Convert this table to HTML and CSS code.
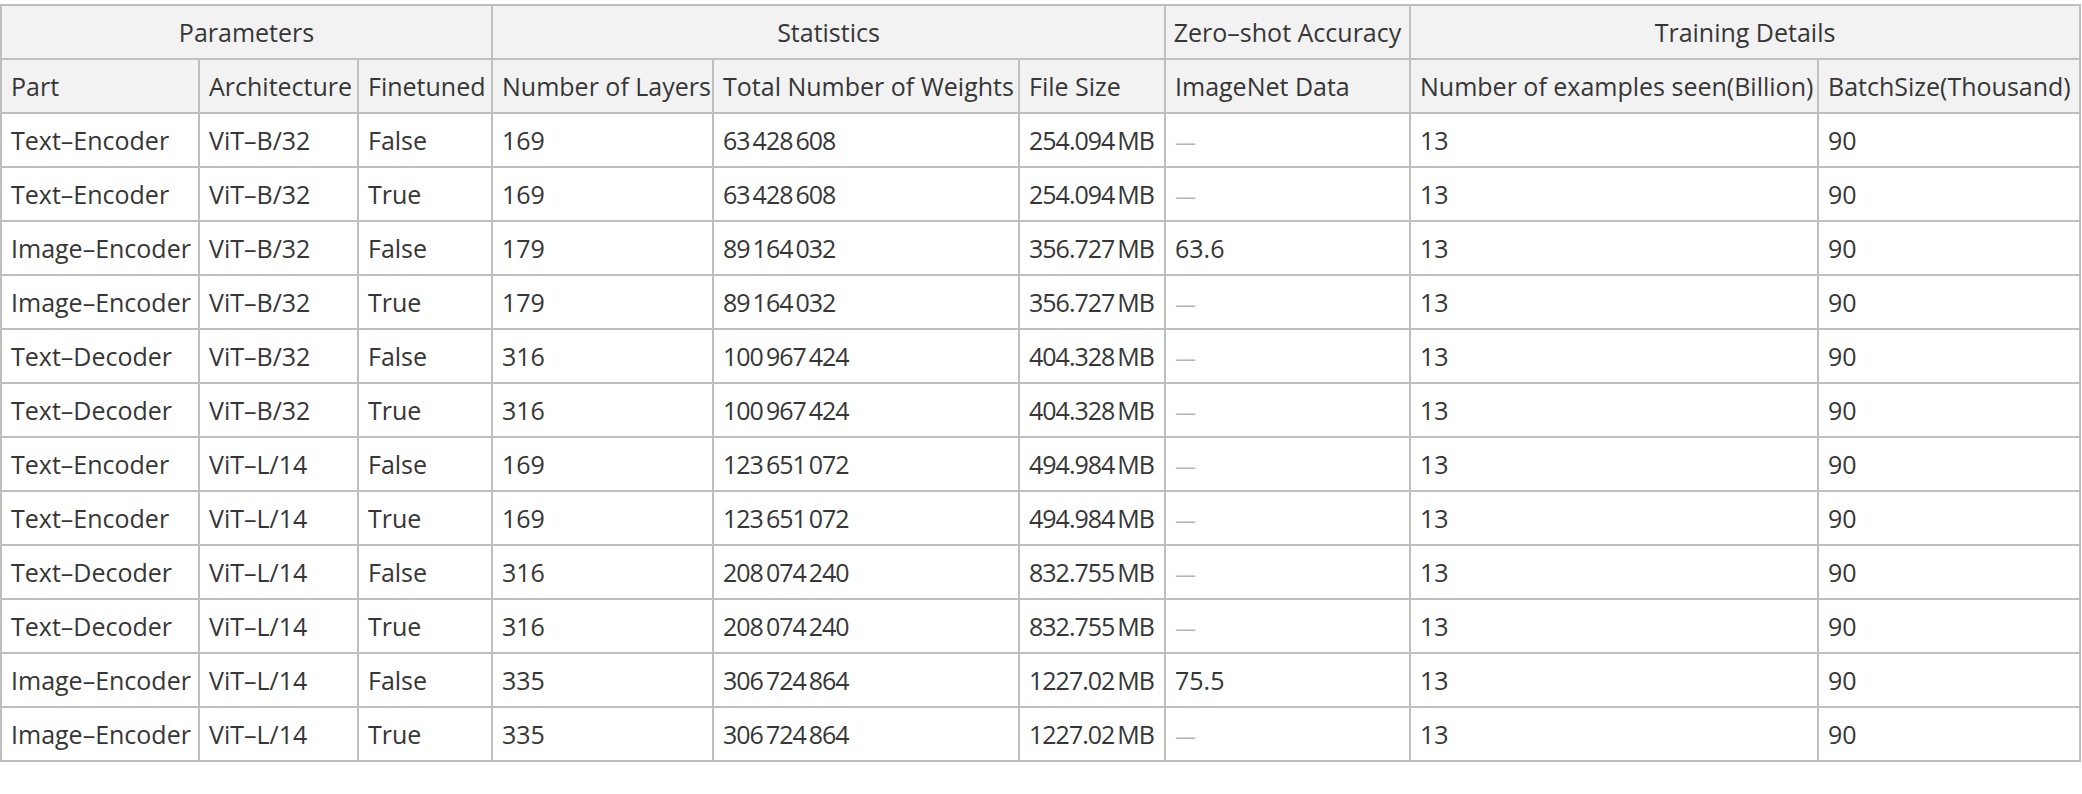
FILE: index.html
```html
<!DOCTYPE html>
<html lang="en">
<head>
<meta charset="utf-8">
<title>Model details</title>
<link rel="stylesheet" href="styles.css">
</head>
<body>
<div class="page">
<table class="grid">
  <colgroup>
    <col class="c-part">
    <col class="c-arch">
    <col class="c-fine">
    <col class="c-layers">
    <col class="c-weights">
    <col class="c-size">
    <col class="c-acc">
    <col class="c-seen">
    <col class="c-batch">
  </colgroup>
  <thead>
    <tr class="group">
      <th colspan="3">Parameters</th>
      <th colspan="3">Statistics</th>
      <th>Zero–shot Accuracy</th>
      <th colspan="2">Training Details</th>
    </tr>
    <tr class="sub">
      <th>Part</th>
      <th>Architecture</th>
      <th>Finetuned</th>
      <th>Number of Layers</th>
      <th>Total Number of Weights</th>
      <th>File Size</th>
      <th>ImageNet Data</th>
      <th>Number of examples seen(Billion)</th>
      <th>BatchSize(Thousand)</th>
    </tr>
  </thead>
  <tbody>
    <tr><td>Text–Encoder</td><td>ViT–B/32</td><td>False</td><td>169</td><td class="num">63 428 608</td><td class="num">254.094 MB</td><td><span class="na">—</span></td><td>13</td><td>90</td></tr>
    <tr><td>Text–Encoder</td><td>ViT–B/32</td><td>True</td><td>169</td><td class="num">63 428 608</td><td class="num">254.094 MB</td><td><span class="na">—</span></td><td>13</td><td>90</td></tr>
    <tr><td>Image–Encoder</td><td>ViT–B/32</td><td>False</td><td>179</td><td class="num">89 164 032</td><td class="num">356.727 MB</td><td>63.6</td><td>13</td><td>90</td></tr>
    <tr><td>Image–Encoder</td><td>ViT–B/32</td><td>True</td><td>179</td><td class="num">89 164 032</td><td class="num">356.727 MB</td><td><span class="na">—</span></td><td>13</td><td>90</td></tr>
    <tr><td>Text–Decoder</td><td>ViT–B/32</td><td>False</td><td>316</td><td class="num">100 967 424</td><td class="num">404.328 MB</td><td><span class="na">—</span></td><td>13</td><td>90</td></tr>
    <tr><td>Text–Decoder</td><td>ViT–B/32</td><td>True</td><td>316</td><td class="num">100 967 424</td><td class="num">404.328 MB</td><td><span class="na">—</span></td><td>13</td><td>90</td></tr>
    <tr><td>Text–Encoder</td><td>ViT–L/14</td><td>False</td><td>169</td><td class="num">123 651 072</td><td class="num">494.984 MB</td><td><span class="na">—</span></td><td>13</td><td>90</td></tr>
    <tr><td>Text–Encoder</td><td>ViT–L/14</td><td>True</td><td>169</td><td class="num">123 651 072</td><td class="num">494.984 MB</td><td><span class="na">—</span></td><td>13</td><td>90</td></tr>
    <tr><td>Text–Decoder</td><td>ViT–L/14</td><td>False</td><td>316</td><td class="num">208 074 240</td><td class="num">832.755 MB</td><td><span class="na">—</span></td><td>13</td><td>90</td></tr>
    <tr><td>Text–Decoder</td><td>ViT–L/14</td><td>True</td><td>316</td><td class="num">208 074 240</td><td class="num">832.755 MB</td><td><span class="na">—</span></td><td>13</td><td>90</td></tr>
    <tr><td>Image–Encoder</td><td>ViT–L/14</td><td>False</td><td>335</td><td class="num">306 724 864</td><td class="num">1227.02 MB</td><td>75.5</td><td>13</td><td>90</td></tr>
    <tr><td>Image–Encoder</td><td>ViT–L/14</td><td>True</td><td>335</td><td class="num">306 724 864</td><td class="num">1227.02 MB</td><td><span class="na">—</span></td><td>13</td><td>90</td></tr>
  </tbody>
</table>
</div>
</body>
</html>
```
FILE: styles.css
```css
html, body {
  margin: 0;
  padding: 0;
  background: #ffffff;
}

.page {
  padding-top: 4px;
}

.grid {
  table-layout: fixed;
  width: 2081px;
  border-collapse: separate;
  border-spacing: 0;
  border-top: 2px solid #bfbfbf;
  border-left: 2px solid #bfbfbf;
  font-family: "Open Sans", "Liberation Sans", sans-serif;
  font-size: 25px;
  color: #363636;
}

.c-part { width: 198px; }
.c-arch { width: 159px; }
.c-fine { width: 134px; }
.c-layers { width: 221px; }
.c-weights { width: 306px; }
.c-size { width: 146px; }
.c-acc { width: 245px; }
.c-seen { width: 408px; }
.c-batch { width: 262px; }

.grid tr {
  height: 54px;
}

.grid th,
.grid td {
  padding: 0 0 0 9px;
  border-right: 2px solid #bfbfbf;
  border-bottom: 2px solid #bfbfbf;
  white-space: nowrap;
  overflow: hidden;
  vertical-align: middle;
  font-weight: 400;
  line-height: 1.2;
}

.grid th {
  background: #f2f2f2;
  text-align: left;
}

.grid .group th {
  text-align: center;
  padding: 0;
}

.grid td.num {
  letter-spacing: -1px;
  word-spacing: -2.5px;
}

.na {
  color: #b4b4b4;
  font-size: 21px;
}
```
